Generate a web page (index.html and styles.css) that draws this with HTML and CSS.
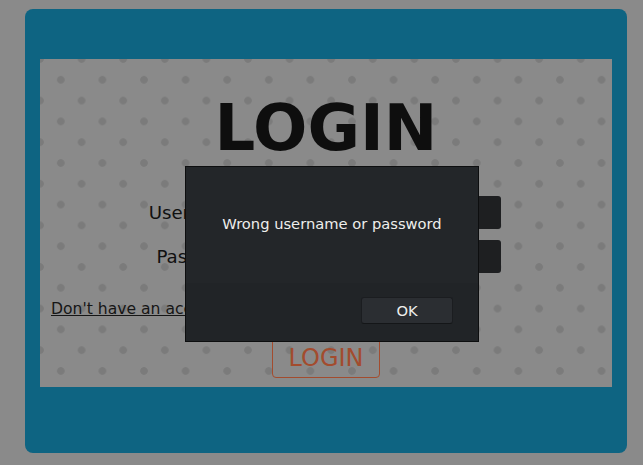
FILE: index.html
```html
<!DOCTYPE html>
<html lang="en">
<head>
<meta charset="utf-8">
<title>Login</title>
<link rel="stylesheet" href="styles.css">
</head>
<body>
  <div class="card">
    <div class="panel">
      <h1 class="title">LOGIN</h1>
      <form class="form">
        <label class="label" for="user">Username</label>
        <input class="field" id="user" type="text">
        <label class="label" for="pass">Password</label>
        <input class="field" id="pass" type="password">
      </form>
      <a class="signup" href="#">Don't have an account? Register</a>
      <button class="login-btn" type="button">LOGIN</button>
    </div>
  </div>

  <div class="modal" role="dialog">
    <div class="modal-body">Wrong username or password</div>
    <div class="modal-footer">
      <button class="ok" type="button">OK</button>
    </div>
  </div>
</body>
</html>
```
FILE: styles.css
```css
html, body {
  margin: 0;
  padding: 0;
}

body {
  background: #8a8a8a;
  font-family: "DejaVu Sans", Verdana, sans-serif;
  padding: 9px 0 0 25px;
  height: 465px;
  box-sizing: border-box;
}

.card {
  width: 602px;
  height: 444px;
  box-sizing: border-box;
  padding: 50px 15px 66px;
  background: #0e6482;
  border-radius: 8px;
}

.panel {
  height: 328px;
  display: flex;
  flex-direction: column;
  align-items: center;
  background-color: #8a8a8a;
  background-image:
    radial-gradient(circle, #7b7b7b 3.4px, rgba(123,123,123,0) 4.2px),
    radial-gradient(circle, #7b7b7b 3.4px, rgba(123,123,123,0) 4.2px);
  background-size: 41.6px 41.6px, 41.6px 41.6px;
  background-position: -20.8px -20.8px, 0 0;
}

.title {
  margin: 37px 0 0;
  font-size: 64px;
  line-height: 64px;
  font-weight: bold;
  color: #0e0e0e;
  letter-spacing: 0;
}

.form {
  margin: 36px 0 0;
  display: grid;
  grid-template-columns: auto 250px;
  column-gap: 10px;
  row-gap: 11px;
  align-items: center;
  position: relative;
  left: -1px;
}

.label {
  font-size: 18.2px;
  color: #111111;
  text-align: right;
}

.field {
  height: 33px;
  box-sizing: border-box;
  border: none;
  border-radius: 3px;
  background: #1e1f21;
  margin: 0;
  padding: 0 8px;
}

.signup {
  align-self: flex-start;
  margin: 27px 0 0 11px;
  font-size: 15.6px;
  color: #161616;
  text-decoration: underline;
}

.login-btn {
  margin-top: 20px;
  padding: 5px 15px;
  font-family: "DejaVu Sans", Verdana, sans-serif;
  font-size: 24px;
  line-height: 28px;
  color: #a34c2e;
  background: transparent;
  border: 1px solid #a34c2e;
  border-radius: 4px;
}

.modal {
  position: fixed;
  left: 185px;
  top: 166px;
  width: 294px;
  height: 176px;
  box-sizing: border-box;
  border: 1px solid #0d0e0f;
  background: #232629;
  display: flex;
  flex-direction: column;
  color: #eeeeec;
  font-size: 14.7px;
}

.modal-body {
  flex: 1;
  padding-top: 48px;
  text-align: center;
}

.modal-footer {
  height: 58px;
  box-sizing: border-box;
  padding: 14px 25px 0;
  display: flex;
  justify-content: flex-end;
  align-items: flex-start;
  background: #212427;
}

.ok {
  width: 92px;
  height: 27px;
  box-sizing: border-box;
  border: 1px solid #1b1d20;
  border-bottom-color: #141618;
  border-radius: 3px;
  background: #2b2e32;
  color: #eeeeec;
  font-family: "DejaVu Sans", Verdana, sans-serif;
  font-size: 14.7px;
  padding: 0;
}
```
